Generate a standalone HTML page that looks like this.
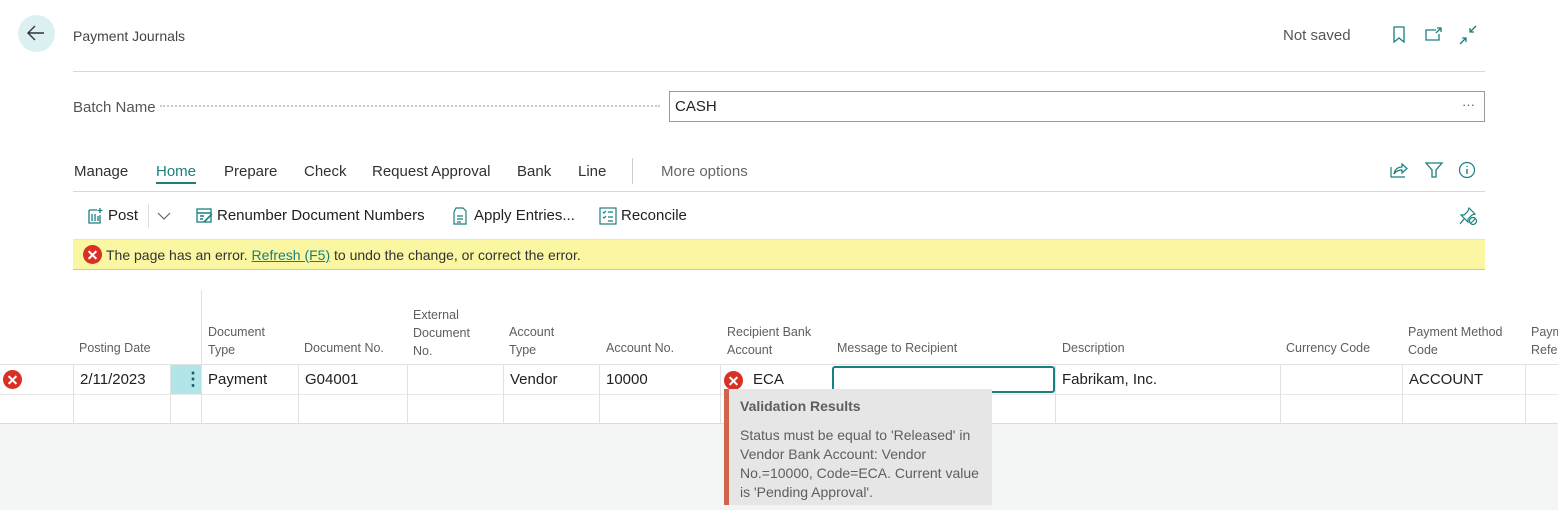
<!DOCTYPE html>
<html><head><meta charset="utf-8"><style>
*{margin:0;padding:0;box-sizing:border-box}
body{width:1568px;height:532px;position:relative;background:#fff;font-family:"Liberation Sans",sans-serif;color:#212121;overflow:hidden}
.a{position:absolute;white-space:nowrap}
.tab{font-size:15px;top:163px;color:#323130}
.hd{font-size:12.5px;color:#605e5c;line-height:18px;position:absolute;white-space:nowrap}
.cell{font-size:15px;position:absolute;top:371px}
.vl{position:absolute;width:1px;background:#e1e1e1}
.err{position:absolute;width:19px;height:19px;border-radius:50%;background:#d93025}
.err:before,.err:after{content:"";position:absolute;left:4px;top:8.5px;width:11px;height:2px;background:#fff;transform:rotate(45deg)}
.err:after{transform:rotate(-45deg)}
svg{position:absolute}
</style></head><body>
<!-- header -->
<div class="a" style="left:18px;top:15px;width:37px;height:37px;border-radius:50%;background:#dcf0f2"></div>
<svg style="left:26px;top:24px" width="20" height="18" viewBox="0 0 20 18"><path d="M9 2 L2 9 L9 16 M2 9 H18" stroke="#333" stroke-width="1.4" fill="none"/></svg>
<div class="a" style="left:73px;top:28px;font-size:14px;color:#444">Payment Journals</div>
<div class="a" style="left:1283px;top:27px;font-size:15px;color:#555">Not saved</div>
<svg style="left:1391px;top:25px" width="16" height="20" viewBox="0 0 16 20"><path d="M3 2 H13 V17 L8 13 L3 17 Z" stroke="#1a7f7f" stroke-width="1.3" fill="none"/></svg>
<svg style="left:1424px;top:25px" width="20" height="18" viewBox="0 0 20 18"><path d="M12 5 H2 V15 H15 V9 M13 3 L17 3 L17 7 M17 3 L12 8" stroke="#1a7f7f" stroke-width="1.3" fill="none"/></svg>
<svg style="left:1457px;top:24px" width="22" height="22" viewBox="0 0 22 22"><path d="M19 2 L13 8 M13 4 V8 H17 M3 20 L9 14 M5 14 H9 V18" stroke="#1a7f7f" stroke-width="1.3" fill="none"/></svg>
<div class="a" style="left:73px;top:71px;width:1412px;height:1px;background:#d8d8d8"></div>
<div class="a" style="left:73px;top:99px;font-size:15px;color:#555">Batch Name</div>
<div class="a" style="left:160px;top:105px;width:500px;border-top:2px dotted #c8c8c8"></div>
<div class="a" style="left:669px;top:91px;width:816px;height:31px;border:1px solid #9a9a9a"></div>
<div class="a" style="left:675px;top:98px;font-size:15px">CASH</div>
<div class="a" style="left:1462px;top:97px;font-size:13px;color:#555">···</div>
<!-- tabs -->
<div class="a tab" style="left:74px">Manage</div>
<div class="a tab" style="left:156px;color:#1a7f7f">Home</div>
<div class="a" style="left:156px;top:182px;width:40px;height:2px;background:#1a7f7f"></div>
<div class="a tab" style="left:224px">Prepare</div>
<div class="a tab" style="left:304px">Check</div>
<div class="a tab" style="left:372px">Request Approval</div>
<div class="a tab" style="left:517px">Bank</div>
<div class="a tab" style="left:578px">Line</div>
<div class="a" style="left:632px;top:158px;width:1px;height:26px;background:#ccc"></div>
<div class="a tab" style="left:661px;color:#666">More options</div>
<svg style="left:1389px;top:161px" width="20" height="18" viewBox="0 0 20 18"><path d="M2 6 V16 H16 M5 13 C6 8 9 6 13 6 V3 L18 7.5 L13 12 V9 C10 9 7 10 5 13 Z" stroke="#1a7f7f" stroke-width="1.2" fill="none"/></svg>
<svg style="left:1424px;top:161px" width="20" height="18" viewBox="0 0 20 18"><path d="M2 2 H18 L12 9 V16 L8 16 V9 Z" stroke="#1a7f7f" stroke-width="1.3" fill="none"/></svg>
<svg style="left:1458px;top:161px" width="18" height="18" viewBox="0 0 18 18"><circle cx="9" cy="9" r="7.5" stroke="#1a7f7f" stroke-width="1.2" fill="none"/><path d="M9 8 V13 M9 5 V6" stroke="#1a7f7f" stroke-width="1.4"/></svg>
<div class="a" style="left:73px;top:191px;width:1412px;height:1px;background:#d8d8d8"></div>
<!-- action bar -->
<svg style="left:87px;top:206px" width="18" height="19" viewBox="0 0 18 19"><path d="M2 4 H10 M2 4 V17 H13 V9 M5 8 V15 M8 8 V15 M11 10 V15 M13 2 V7 M10.5 4.5 H15.5" stroke="#1a7f7f" stroke-width="1.3" fill="none"/></svg>
<div class="a" style="left:108px;top:207px;font-size:15px">Post</div>
<div class="a" style="left:148px;top:204px;width:1px;height:24px;background:#ddd"></div>
<svg style="left:156px;top:211px" width="16" height="10" viewBox="0 0 16 10"><path d="M2 2 L8 8 L14 2" stroke="#666" stroke-width="1.2" fill="none"/></svg>
<svg style="left:196px;top:207px" width="18" height="18" viewBox="0 0 18 18"><rect x="1" y="2" width="14" height="13" stroke="#1a7f7f" stroke-width="1.3" fill="none"/><path d="M1 6 H15 M4 9 H8 M4 12 H7 M8 15 L16 7" stroke="#1a7f7f" stroke-width="1.6"/></svg>
<div class="a" style="left:217px;top:207px;font-size:15px">Renumber Document Numbers</div>
<svg style="left:452px;top:206px" width="16" height="20" viewBox="0 0 16 20"><path d="M4 2 H11 L14 5 V18 H2 V6 Z M5 10 H11 M5 13 H11 M5 16 H9" stroke="#1a7f7f" stroke-width="1.2" fill="none"/></svg>
<div class="a" style="left:474px;top:207px;font-size:15px">Apply Entries...</div>
<svg style="left:599px;top:207px" width="18" height="18" viewBox="0 0 18 18"><rect x="1" y="1" width="16" height="16" stroke="#1a7f7f" stroke-width="1.2" fill="none"/><path d="M4 5 L5 6 L7 4 M9 5 H14 M4 10 L5 11 L7 9 M9 10 H14 M9 14 H14" stroke="#1a7f7f" stroke-width="1.2" fill="none"/></svg>
<div class="a" style="left:621px;top:207px;font-size:15px">Reconcile</div>
<svg style="left:1458px;top:206px" width="20" height="20" viewBox="0 0 20 20"><path d="M11 2 L17 8 L14 9 L10 13 L10 16 L3 9 L6 9 L10 5 Z M6 13 L2 18" stroke="#1a7f7f" stroke-width="1.2" fill="none"/><circle cx="15" cy="15" r="3.5" stroke="#1a7f7f" stroke-width="1.2" fill="#fff"/><path d="M13 17 L17 13" stroke="#1a7f7f" stroke-width="1.2"/></svg>
<!-- error bar -->
<div class="a" style="left:73px;top:239px;width:1412px;height:31px;background:#faf6a2;border-top:1px solid #e8e6c0;border-bottom:1px solid #cfcb8a"></div>
<div class="err" style="left:83px;top:245px"></div>
<div class="a" style="left:106px;top:247px;font-size:14px;color:#333">The page has an error. <span style="color:#1a7f7f;text-decoration:underline">Refresh (F5)</span> to undo the change, or correct the error.</div>
<!-- grid -->
<div class="a" style="left:0;top:424px;width:1558px;height:86px;background:#f3f6f5"></div>
<div class="a" style="left:0;top:364px;width:1558px;height:1px;background:#e1e1e1"></div>
<div class="a" style="left:0;top:394px;width:1558px;height:1px;background:#e8e8e8"></div>
<div class="a" style="left:0;top:423px;width:1558px;height:1px;background:#dcdcdc"></div>
<div class="vl" style="left:201px;top:290px;height:134px"></div>
<div class="vl" style="left:73px;top:364px;height:60px"></div>
<div class="vl" style="left:170px;top:364px;height:60px"></div>
<div class="vl" style="left:298px;top:364px;height:60px"></div>
<div class="vl" style="left:407px;top:364px;height:60px"></div>
<div class="vl" style="left:503px;top:364px;height:60px"></div>
<div class="vl" style="left:599px;top:364px;height:60px"></div>
<div class="vl" style="left:720px;top:364px;height:60px"></div>
<div class="vl" style="left:1055px;top:364px;height:60px"></div>
<div class="vl" style="left:1280px;top:364px;height:60px"></div>
<div class="vl" style="left:1402px;top:364px;height:60px"></div>
<div class="vl" style="left:1525px;top:364px;height:60px"></div>
<div class="hd" style="left:79px;top:339px">Posting Date</div>
<div class="hd" style="left:208px;top:323px">Document<br>Type</div>
<div class="hd" style="left:304px;top:339px">Document No.</div>
<div class="hd" style="left:413px;top:306px">External<br>Document<br>No.</div>
<div class="hd" style="left:509px;top:323px">Account<br>Type</div>
<div class="hd" style="left:606px;top:339px">Account No.</div>
<div class="hd" style="left:727px;top:323px">Recipient Bank<br>Account</div>
<div class="hd" style="left:837px;top:339px">Message to Recipient</div>
<div class="hd" style="left:1062px;top:339px">Description</div>
<div class="hd" style="left:1286px;top:339px">Currency Code</div>
<div class="hd" style="left:1408px;top:323px">Payment Method<br>Code</div>
<div class="hd" style="left:1531px;top:323px">Payment<br>Reference</div>
<div class="err" style="left:3px;top:370px"></div>
<div class="cell" style="left:80px">2/11/2023</div>
<div class="a" style="left:171px;top:365px;width:30px;height:29px;background:#b2e5e8"></div>
<div class="a" style="left:184px;top:369px;font-size:18px;color:#1a5f5f;font-weight:bold">⋮</div>
<div class="cell" style="left:208px">Payment</div>
<div class="cell" style="left:305px">G04001</div>
<div class="cell" style="left:510px">Vendor</div>
<div class="cell" style="left:606px">10000</div>
<div class="err" style="left:724px;top:371px"></div>
<div class="cell" style="left:753px">ECA</div>
<div class="a" style="left:832px;top:366px;width:223px;height:27px;border:2px solid #1a7f7f;border-radius:3px;background:#fff"></div>
<div class="cell" style="left:1062px">Fabrikam, Inc.</div>
<div class="cell" style="left:1409px">ACCOUNT</div>
<div class="a" style="left:1558px;top:0;width:10px;height:532px;background:#fff"></div>
<!-- tooltip -->
<div class="a" style="left:724px;top:389px;width:268px;height:116px;background:#e6e6e6;border-left:5px solid #d0654a;white-space:normal;padding:8px 10px 0 11px;color:#605e5c;font-size:14px;line-height:19px">
<div style="font-weight:bold;margin-bottom:10px">Validation Results</div>
Status must be equal to 'Released' in Vendor Bank Account: Vendor No.=10000, Code=ECA. Current value is 'Pending Approval'.</div>
</body></html>
